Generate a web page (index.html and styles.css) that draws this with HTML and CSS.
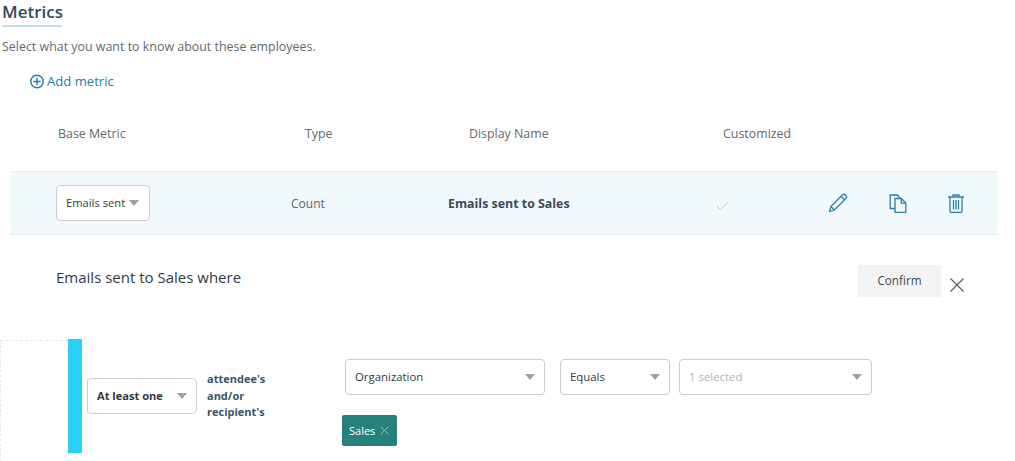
FILE: index.html
```html
<!DOCTYPE html>
<html lang="en">
<head>
    <meta charset="UTF-8">
    <meta name="viewport" content="width=device-width, initial-scale=1.0">
    <title>Metrics</title>
    <link rel="stylesheet" href="styles.css">
</head>
<body>

<div class="heading-wrap">
    <h1 class="heading">Metrics</h1>
</div>
<p class="intro">Select what you want to know about these employees.</p>

<a class="add-metric" href="#">
    <svg width="15" height="15" viewBox="0 0 15 15" fill="none" stroke="#1f7ea5" stroke-width="1.4">
        <circle cx="7" cy="7.5" r="6.2"/>
        <path d="M7 3.8v7.4M3.300 7.5h7.4"/>
    </svg>
    <span>Add metric</span>
</a>

<div class="table-head">
    <span class="col-base">Base Metric</span>
    <span class="col-type">Type</span>
    <span class="col-name">Display Name</span>
    <span class="col-custom">Customized</span>
</div>

<div class="metric-row">
    <div class="select select-metric">
        <span>Emails sent</span>
        <i class="caret"></i>
    </div>
    <span class="metric-type">Count</span>
    <span class="metric-name">Emails sent to Sales</span>
    <svg class="metric-check" width="13" height="10" viewBox="0 0 13 10" fill="none" stroke="#8fe3b8" stroke-width="1">
        <path d="M1 5l3.6 3.6L12 1.5"/>
    </svg>
    <div class="metric-actions">
        <svg width="20" height="20" viewBox="1 0 20 20" fill="none" stroke="#2b80a8" stroke-width="1.3">
            <path d="M1.5 18.5l1.4-5L14.6 1.8c.8-.7 1.8-.7 2.5 0l1 1c.7.8.7 1.7 0 2.5L6.4 17z"/>
            <path d="M2.9 13.5l3.5 3.5M13 3.4l3.6 3.6"/>
        </svg>
        <svg width="18" height="19" viewBox="0 0 18 19" fill="none" stroke="#2b80a8" stroke-width="1.3">
            <path d="M6 14.5H1.2V1h7.3l2.4 3"/>
            <path d="M6 4.500h6.500l4.300 4.500v9.300H6z"/>
            <path d="M12.300 4.500v4.700h4.500"/>
        </svg>
        <svg class="action-trash" width="16" height="19" viewBox="0 0 16 19" fill="none" stroke="#2b80a8" stroke-width="1.3">
            <path d="M0 3h16M5 3V1h6v2"/>
            <path d="M2 3v14.300c0 .6.400 1 1 1h10c.6 0 1-.4 1-1V3"/>
            <path d="M5.500 6v9.500M8 6v9.500M10.500 6v9.500"/>
        </svg>
    </div>
</div>

<div class="where-row">
    <h2 class="where-title">Emails sent to Sales where</h2>
    <button class="confirm" type="button">Confirm</button>
    <svg class="close" width="14" height="14" viewBox="0 0 14 14" fill="none" stroke="#4a5a66" stroke-width="1.1">
        <path d="M.5.5l13 13M13.500.5l-13 13"/>
    </svg>
</div>

<div class="condition">
    <div class="condition-guide"></div>
    <div class="condition-bar"></div>
    <div class="select select-quant">
        <span>At least one</span>
        <i class="caret"></i>
    </div>
    <div class="condition-label">attendee's<br>and/or<br>recipient's</div>
    <div class="condition-fields">
        <div class="field-row">
            <div class="select select-org">
                <span>Organization</span>
                <i class="caret"></i>
            </div>
            <div class="select select-op">
                <span>Equals</span>
                <i class="caret"></i>
            </div>
            <div class="select select-val">
                <span>1 selected</span>
                <i class="caret"></i>
            </div>
        </div>
        <div class="tag">
            <span>Sales</span>
            <svg width="9" height="9" viewBox="0 0 9 9" fill="none" stroke="#8fc0bc" stroke-width="1">
                <path d="M.5.5l8 8M8.500.5l-8 8"/>
            </svg>
        </div>
    </div>
</div>

</body>
</html>
```

FILE: styles.css
```css
* {
    box-sizing: border-box;
}
html, body {
    height: 461px;
    overflow: hidden;
}
body {
    margin: 0;
    font-family: "Open Sans", "Noto Sans", sans-serif;
    font-size: 12px;
    color: #5f6368;
    background: #fff;
}
.heading-wrap {
    padding: 0 0 0 2px;
}
.heading {
    display: inline-block;
    margin: 0;
    height: 27px;
    width: 60px;
    font-size: 17px;
    line-height: 24px;
    font-weight: 600;
    color: #34495a;
    border-bottom: 2px solid #c6dde4;
    white-space: nowrap;
}
.intro {
    margin: 11px 0 0 2px;
    height: 18px;
    line-height: 18px;
    font-size: 12.43px;
    color: #66686c;
}
.add-metric {
    display: flex;
    align-items: center;
    gap: 2px;
    margin: 16px 0 0 30px;
    height: 18px;
    font-size: 13.1px;
    color: #1f7ea5;
    text-decoration: none;
}
.table-head {
    display: flex;
    margin-top: 34px;
    height: 20px;
    line-height: 20px;
    padding-left: 58px;
    font-size: 12.4px;
    color: #66686c;
}
.col-base {
    width: 247px;
}
.col-type {
    width: 164px;
}
.col-name {
    width: 254px;
}
.metric-row {
    display: flex;
    align-items: center;
    margin: 27px 18px 0 10px;
    height: 64px;
    padding-left: 46px;
    background: #f2f9fc;
    border-top: 1px solid #e3eef2;
    border-bottom: 1px solid #e3eef2;
}
.select {
    display: flex;
    align-items: center;
    justify-content: space-between;
    height: 36px;
    padding: 0 9px 1px;
    background: #fff;
    border: 1px solid #cccccc;
    border-radius: 4px;
    font-size: 11.4px;
    color: #33393f;
}
.caret {
    width: 0;
    height: 0;
    border-left: 5.5px solid transparent;
    border-right: 5.5px solid transparent;
    border-top: 6px solid #a0a0a0;
}
.select-metric {
    width: 94px;
    padding-right: 10px;
    font-size: 11.2px;
}
.metric-type {
    margin-left: 141px;
    width: 157px;
}
.metric-name {
    width: 268px;
    font-size: 12.4px;
    font-weight: 700;
    color: #3a4a56;
}
.metric-check {
    margin-top: 6px;
}
.metric-actions {
    display: flex;
    align-items: center;
    margin-left: 100px;
    gap: 40px;
}
.metric-actions svg {
    flex: none;
}
.action-trash {
    margin-left: 1px;
}
.where-row {
    display: flex;
    align-items: flex-start;
    margin-top: 30px;
    padding-left: 56px;
    height: 75px;
}
.where-title {
    margin: 1px 0 0;
    width: 802px;
    font-size: 15px;
    line-height: 22px;
    font-weight: 400;
    color: #2f3b45;
}
.confirm {
    width: 83px;
    height: 32px;
    padding: 0 0 2px;
    background: #f3f3f3;
    border: none;
    font-family: inherit;
    font-size: 11.7px;
    color: #3d4a54;
}
.close {
    margin: 13px 0 0 9px;
}
.condition {
    display: flex;
    height: 121px;
}
.condition-guide {
    width: 68px;
    border-top: 1px dashed #dcecf2;
    border-left: 1px dashed #dcecf2;
}
.condition-bar {
    width: 14px;
    height: 114px;
    margin-top: -1px;
    background: #2bd0f7;
}
.select-quant {
    width: 110px;
    margin: 38px 0 0 5px;
    font-size: 11.1px;
    font-weight: 700;
}
.condition-label {
    margin: 31px 0 0 10px;
    width: 138px;
    font-size: 11px;
    line-height: 16.500px;
    font-weight: 700;
    color: #3a5568;
}
.field-row {
    display: flex;
    margin-top: 19px;
}
.select-org {
    width: 200px;
}
.select-op {
    width: 110px;
    margin-left: 15px;
}
.select-val {
    width: 193px;
    margin-left: 9px;
    color: #aeb3b8;
}
.tag {
    display: flex;
    align-items: center;
    gap: 5px;
    width: 55px;
    height: 31px;
    margin: 20px 0 0 -3px;
    padding-left: 7px;
    background: #26807c;
    border-radius: 2px;
    font-size: 11px;
    color: #fff;
}
```
